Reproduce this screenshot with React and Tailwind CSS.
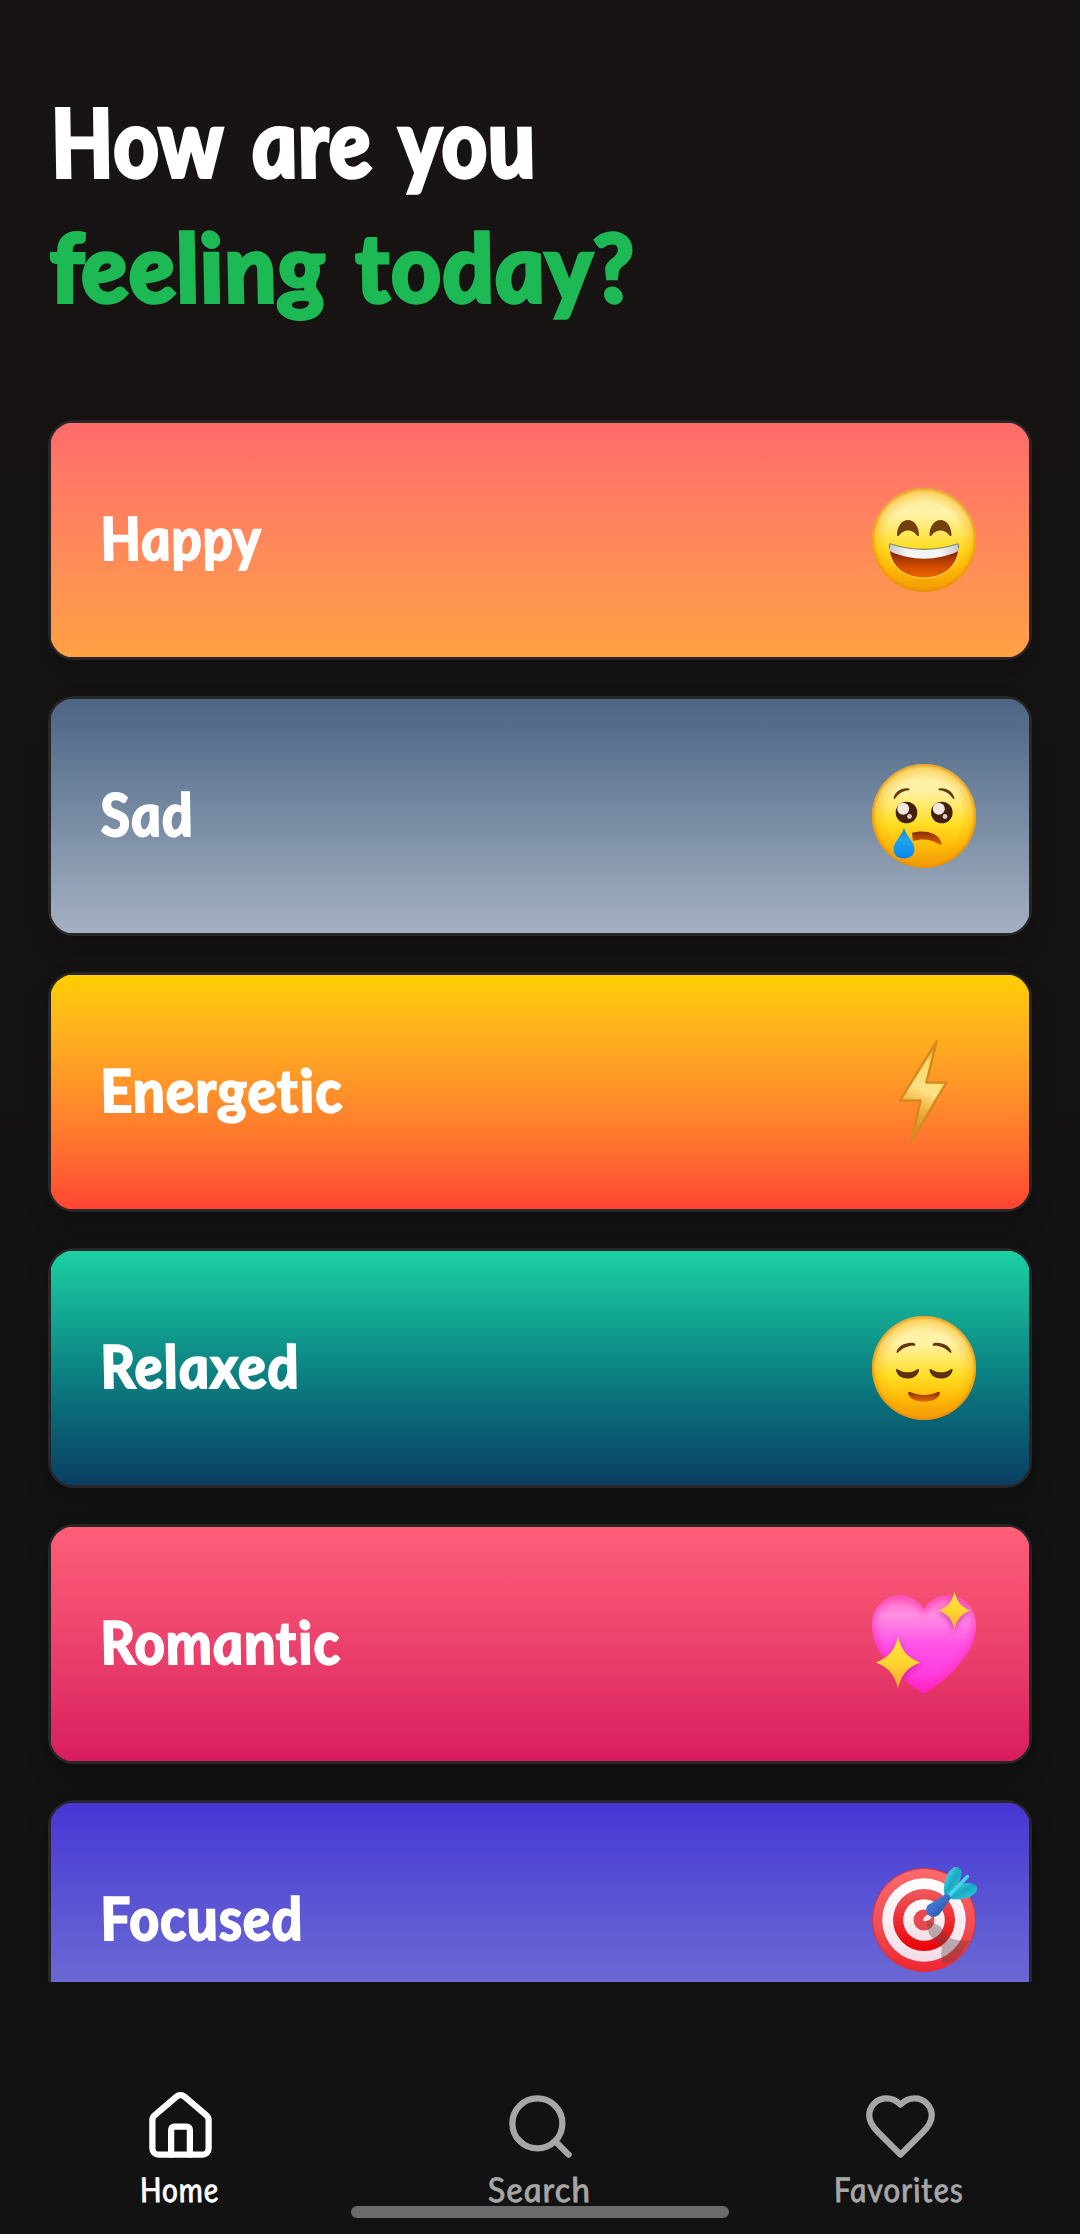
import React, { useLayoutEffect, useRef, useState } from "react";

// Text line squeezed horizontally to an exact width, with the italic slant removed.
function FitText({ width, className = "", children }) {
  const ref = useRef(null);
  const [scale, setScale] = useState(1);
  useLayoutEffect(() => {
    const fit = () => {
      if (ref.current) setScale(width / ref.current.offsetWidth);
    };
    fit();
    if (document.fonts) document.fonts.ready.then(fit);
  }, [width]);
  return (
    <span className="block" style={{ width }}>
      <span
        ref={ref}
        className={"inline-block whitespace-nowrap italic origin-[0%_80%] [font-variant-ligatures:none] " + className}
        style={{ transform: `scaleX(${scale}) skewX(8deg)` }}
      >
        {children}
      </span>
    </span>
  );
}

function FaceBase({ id }) {
  return (
    <>
      <defs>
        <linearGradient id={id + "l"} x1="0" y1="0" x2="0" y2="1">
          <stop offset="0" stopColor="#ffeb98" />
          <stop offset="0.25" stopColor="#fff3a8" />
          <stop offset="0.58" stopColor="#ffdd22" />
          <stop offset="0.8" stopColor="#ffba08" />
          <stop offset="1" stopColor="#f0920a" />
        </linearGradient>
        <radialGradient id={id + "r"} cx="0.5" cy="0.5" r="0.5">
          <stop offset="0.72" stopColor="#f5a400" stopOpacity="0" />
          <stop offset="0.92" stopColor="#f5a400" stopOpacity="0.35" />
          <stop offset="1" stopColor="#e08a08" stopOpacity="0.85" />
        </radialGradient>
      </defs>
      <circle cx="52" cy="52" r="52" fill={`url(#${id}l)`} />
      <circle cx="52" cy="52" r="52" fill={`url(#${id}r)`} />
    </>
  );
}

function HappyFace() {
  return (
    <svg viewBox="0 0 104 104" className="size-[104px]">
      <defs>
        <linearGradient id="mouth" x1="0" y1="0" x2="0" y2="1">
          <stop offset="0.3" stopColor="#8f2c05" />
          <stop offset="0.65" stopColor="#cf4a00" />
          <stop offset="1" stopColor="#ee6a00" />
        </linearGradient>
        <linearGradient id="teeth" x1="0" y1="0" x2="1" y2="0">
          <stop offset="0" stopColor="#c9c9cc" />
          <stop offset="0.25" stopColor="#f4f3f5" />
          <stop offset="0.75" stopColor="#f4f3f5" />
          <stop offset="1" stopColor="#c9c9cc" />
        </linearGradient>
      </defs>
      <FaceBase id="hf" />
      <path d="M25 47.500c0-9 4.500-15.500 11-15.500s11 6.500 11 15.500c-1 1-2 .5-2.500-.5-2-3-5-4.500-8.500-4.500s-6.500 1.500-8.500 4.500c-.5 1-1.500 1.500-2.500.5z" fill="#75400f" />
      <path d="M57.500 47.500c0-9 4.500-15.500 11-15.500s11 6.500 11 15.500c-1 1-2 .5-2.500-.5-2-3-5-4.500-8.500-4.500s-6.500 1.500-8.500 4.500c-.5 1-1.500 1.500-2.500.5z" fill="#75400f" />
      <path d="M17 57.500c0-1 1-1.700 2-1.300 21 7 45 7 66 0 1-.4 2 .3 2 1.300 0 19-14 32.500-35 32.500s-35-13.500-35-32.500z" fill="url(#mouth)" stroke="#ffd85a" strokeWidth="1" />
      <path d="M17.500 57c0-1 .7-1.300 1.500-1 21 7 45 7 66 0 .8-.3 1.500 0 1.500 1 0 3-.5 5-1 6.500-20 9.500-47 9.500-67 0-.5-1.500-1-3.500-1-6.500z" fill="url(#teeth)" />
      <path d="M17.500 60v-3c0-1 .7-1.300 1.500-1 21 7 45 7 66 0 .8-.3 1.500 0 1.500 1v3" fill="none" stroke="#7f8c66" strokeWidth="1.300" />
    </svg>
  );
}

function SadFace() {
  return (
    <svg viewBox="0 0 104 104" className="size-[104px]">
      <defs>
        <linearGradient id="tear" x1="0" y1="0" x2="0" y2="1">
          <stop offset="0" stopColor="#1780b8" />
          <stop offset="0.4" stopColor="#22a5ee" />
          <stop offset="1" stopColor="#0784ee" />
        </linearGradient>
        <linearGradient id="frown" x1="0" y1="0" x2="0" y2="1">
          <stop offset="0" stopColor="#8a2f04" />
          <stop offset="1" stopColor="#df6000" />
        </linearGradient>
      </defs>
      <FaceBase id="sf" />
      <path d="M21.500 34c2-7 8-10.500 15.500-9.500.8.300.8 1.500 0 1.800-6 .5-10 3-14 8.200-.5.700-1.700.5-1.500-.5zM82.500 34c-2-7-8-10.500-15.500-9.500-.8.300-.8 1.500 0 1.800 6 .5 10 3 14 8.200.5.700 1.700.5 1.500-.5z" fill="#6a3a0e" />
      <circle cx="34.500" cy="48.500" r="10.800" fill="#43200c" />
      <circle cx="69.800" cy="48.500" r="10.800" fill="#43200c" />
      <circle cx="31.200" cy="44.700" r="6" fill="#f1e6e2" />
      <circle cx="66.800" cy="44.700" r="6" fill="#f1e6e2" />
      <circle cx="37.500" cy="52.500" r="2.400" fill="#dccbc6" />
      <circle cx="73" cy="52.500" r="2.400" fill="#dccbc6" />
      <path d="M40 69c9-3 26-2 29.500 10 .3 1.700-1 2.200-2.300 1.400-7.500-5-17-6.400-26.200-3.400z" fill="url(#frown)" />
      <path d="M32 63.500c1.500 8 10.500 14 10.500 21.500 0 6-4 9.500-10.500 9.500s-10.500-3.500-10.500-9.500c0-7.500 9-13.500 10.500-21.500z" fill="url(#tear)" />
    </svg>
  );
}

function Bolt() {
  return (
    <svg viewBox="0 0 104 104" className="size-[104px]">
      <defs>
        <linearGradient id="bolt" x1="0.6" y1="0" x2="0.4" y2="1">
          <stop offset="0" stopColor="#dc8d20" />
          <stop offset="0.2" stopColor="#fbd968" />
          <stop offset="0.48" stopColor="#fce287" />
          <stop offset="0.65" stopColor="#f1b544" />
          <stop offset="0.8" stopColor="#e49a32" />
          <stop offset="1" stopColor="#d08020" />
        </linearGradient>
      </defs>
      <path d="M64.500 1.500 54.500 42.500H74.500L39 102.500 48.500 60.500H28z" fill="url(#bolt)" stroke="#d68a1c" strokeWidth="2.500" strokeLinejoin="round" />
    </svg>
  );
}

function RelaxedFace() {
  return (
    <svg viewBox="0 0 104 104" className="size-[104px]">
      <defs>
        <linearGradient id="smile" x1="0" y1="0" x2="0" y2="1">
          <stop offset="0" stopColor="#8a2f04" />
          <stop offset="1" stopColor="#e06808" />
        </linearGradient>
      </defs>
      <FaceBase id="rf" />
      <path d="M24.500 36c1.500-6 8-9.800 16.500-9.300 2 .3 3 1.800 2 3-6.500-.5-11.500 1.500-17 6.800-.8.700-1.700.4-1.500-.5zM79.500 36c-1.500-6-8-9.800-16.500-9.300-2 .3-3 1.800-2 3 6.500-.5 11.500 1.500 17 6.800.8.700 1.700.4 1.500-.5z" fill="#643711" />
      <path d="M24 54.500c-.3-1.500 1-2 2-1 6.500 3.800 13 3.800 19 0 1.200-1 2.500-.3 2 1.200-1.500 5-5.500 7.800-11.500 7.800s-10.300-3-11.500-8zM57.500 54.500c-.3-1.500 1-2 2-1 6.500 3.800 13 3.800 19 0 1.200-1 2.500-.3 2 1.200-1.500 5-5.500 7.800-11.500 7.800s-10.300-3-11.500-8z" fill="#5c3011" />
      <path d="M36 77.500c-.3-1.700 1-2.200 2.300-1.500 9 4 18.500 4 27.500 0 1.300-.7 2.500-.2 2.200 1.500-1.500 5.500-7.500 8-16 8s-14.500-2.500-16-8z" fill="url(#smile)" />
    </svg>
  );
}

function SparkHeart() {
  return (
    <svg viewBox="0 0 104 104" className="size-[104px] overflow-visible">
      <defs>
        <linearGradient id="hrt" x1="0" y1="0" x2="0" y2="1">
          <stop offset="0" stopColor="#ff6cc0" />
          <stop offset="0.2" stopColor="#ff8fe4" />
          <stop offset="0.5" stopColor="#ff52e6" />
          <stop offset="0.8" stopColor="#ff3ddd" />
          <stop offset="1" stopColor="#ff1fc4" />
        </linearGradient>
        <linearGradient id="spark" x1="0" y1="0" x2="0" y2="1">
          <stop offset="0" stopColor="#ffe73a" />
          <stop offset="0.5" stopColor="#ffd531" />
          <stop offset="1" stopColor="#f8a62a" />
        </linearGradient>
        <clipPath id="hclip">
          <path d="M52 101.500C38 94 0 66 0 34 0 16 12 3.500 28 3.500c11 0 19 5.500 24 13.500C57 9 65 3.500 76 3.500c16 0 28 12.500 28 30.500 0 32-38 60-52 67.500z" />
        </clipPath>
        <filter id="soft" x="-20%" y="-20%" width="140%" height="140%">
          <feGaussianBlur stdDeviation="3" />
        </filter>
      </defs>
      <path d="M52 101.500C38 94 0 66 0 34 0 16 12 3.500 28 3.500c11 0 19 5.500 24 13.500C57 9 65 3.500 76 3.500c16 0 28 12.500 28 30.500 0 32-38 60-52 67.500z" fill="url(#hrt)" />
      <g clipPath="url(#hclip)">
        <path d="M52 101.500C38 94 0 66 0 34 0 16 12 3.500 28 3.500c11 0 19 5.500 24 13.500C57 9 65 3.500 76 3.500c16 0 28 12.500 28 30.500 0 32-38 60-52 67.500z" fill="none" stroke="#ff2ab0" strokeWidth="7" opacity="0.6" filter="url(#soft)" />
        <path d="M82 4c2 10 7 15 17 17-10 2-15 9-17 20-2-11-7-18-17-20 10-2 15-7 17-17zM26 48c3 14 9 21 23 25-14 4-20 12-23 26-3-14-9-22-23-26 14-4 20-11 23-25z" fill="#a51079" opacity="0.6" filter="url(#soft)" />
      </g>
      <path d="M82.500-.5c2 9.500 7 16 16 19-9 3-14 9.500-16 19-2-9.500-7-16-16-19 9-3 14-9.500 16-19z" fill="url(#spark)" />
      <path d="M26 44.500c3 13 9.500 21.500 22 26-12.500 4.500-19 13-22 26-3-13-9.500-21.500-22-26 12.500-4.500 19-13 22-26z" fill="url(#spark)" />
    </svg>
  );
}

function Target() {
  return (
    <svg viewBox="0 0 104 104" className="size-[104px] overflow-visible">
      <defs>
        <linearGradient id="ringA" x1="0" y1="0" x2="0" y2="1">
          <stop offset="0" stopColor="#ff6a6c" />
          <stop offset="0.6" stopColor="#ef4a50" />
          <stop offset="1" stopColor="#f02630" />
        </linearGradient>
        <linearGradient id="ringB" x1="0" y1="0" x2="0" y2="1">
          <stop offset="0" stopColor="#ee5a5c" />
          <stop offset="1" stopColor="#ea0008" />
        </linearGradient>
        <linearGradient id="ringW" x1="0" y1="0" x2="0" y2="1">
          <stop offset="0" stopColor="#ffffff" />
          <stop offset="1" stopColor="#f1dde6" />
        </linearGradient>
        <linearGradient id="wing" x1="0" y1="0" x2="1" y2="1">
          <stop offset="0" stopColor="#5fe0ea" />
          <stop offset="0.5" stopColor="#17a9c4" />
          <stop offset="1" stopColor="#3bd2e2" />
        </linearGradient>
        <linearGradient id="shaft" x1="0" y1="0" x2="1" y2="1">
          <stop offset="0" stopColor="#5b8be6" />
          <stop offset="1" stopColor="#1b4fa8" />
        </linearGradient>
        <clipPath id="board">
          <circle cx="52" cy="52" r="51" />
        </clipPath>
      </defs>
      <circle cx="52" cy="52" r="51.500" fill="url(#ringA)" stroke="#d8303c" strokeWidth="1" />
      <circle cx="52" cy="52" r="41.800" fill="url(#ringW)" />
      <circle cx="52" cy="52" r="31" fill="url(#ringB)" />
      <circle cx="52" cy="52" r="20.800" fill="url(#ringW)" />
      <circle cx="52" cy="52" r="10.500" fill="#e64a50" />
      <g clipPath="url(#board)">
        <path d="M54 52 68 58 76 69Q86 74 98 73L84 92 71 96Q68 88 70 80L57 66z" fill="#5c4444" opacity="0.38" />
      </g>
      <path d="M72.500 28c-2-13 2-24 9-28.500 4-1.500 8 1 8 5l-1.500 8-12 15.500z" fill="url(#wing)" />
      <path d="M77 30 89 16c7-2 14-1 16 3 1 5-5 10-12 11.500-6 1.500-12 1-17 0z" fill="url(#wing)" />
      <path d="M76 28.500 95.500 8.500" stroke="#43d6ea" strokeWidth="3.400" strokeLinecap="round" />
      <path d="M51 52.500c0-3 4-6 6-6l3 3c-2 2-6 5-9 3z" fill="#f3e6e8" />
      <path d="M56 37 73 26.500q2-1 4 .5t1 4.500L68 45.500c-3 4-9 4.500-12 1-2.500-3-2.500-6.500 0-9.500z" fill="url(#shaft)" />
    </svg>
  );
}

const moods = [
  { name: "Happy", width: 161, fill: "from-[#ff6b6b] to-[#ffa143]", Icon: HappyFace },
  { name: "Sad", width: 93, fill: "from-[#4b6584] to-[#a5b1c2]", Icon: SadFace },
  { name: "Energetic", width: 243, fill: "from-[#ffce00] to-[#ff4433]", Icon: Bolt },
  { name: "Relaxed", width: 199, fill: "from-[#1dd1a1] to-[#0a3d62]", Icon: RelaxedFace },
  { name: "Romantic", width: 240, fill: "from-[#ff5e78] to-[#d81b60]", Icon: SparkHeart },
  { name: "Focused", width: 203, fill: "from-[#4834d4] to-[#7875d2]", Icon: Target },
];

function MoodCard({ name, width, fill, Icon }) {
  return (
    <div className="h-60 shrink-0 rounded-[26px] border-[3px] border-[#282626] bg-[#151313] shadow-[0_12px_24px_rgba(0,0,0,0.2)]">
      <div className={"flex h-full items-center justify-between bg-linear-to-b pl-[52px] pr-[53px] [clip-path:inset(-1px_round_25px)] " + fill}>
        <div className="pb-[4px]">
          <FitText width={width} className="text-[59px] font-bold leading-[72px] tracking-[1px] [-webkit-text-stroke:2px_white]">
            {name}
          </FitText>
        </div>
        <Icon />
      </div>
    </div>
  );
}

const tabs = [
  {
    name: "Home",
    width: 79,
    tone: "text-white",
    paths: ["M15 21v-8a1 1 0 0 0-1-1h-4a1 1 0 0 0-1 1v8", "M3 10a2 2 0 0 1 .709-1.528l7-6a2 2 0 0 1 2.582 0l7 6A2 2 0 0 1 21 10v9a2 2 0 0 1-2 2H5a2 2 0 0 1-2-2z"],
  },
  {
    name: "Search",
    width: 103,
    tone: "text-[#a7a7a7]",
    paths: ["M19 11a8 8 0 1 1-16 0 8 8 0 0 1 16 0z", "m21 21-4.300-4.300"],
  },
  {
    name: "Favorites",
    width: 130,
    tone: "text-[#a7a7a7]",
    paths: ["M19 14c1.490-1.460 3-3.210 3-5.500A5.500 5.500 0 0 0 16.500 3c-1.760 0-3 .5-4.500 2-1.500-1.500-2.740-2-4.500-2A5.500 5.500 0 0 0 2 8.500c0 2.300 1.500 4.050 3 5.500l7 7Z"],
  },
];

export default function App() {
  return (
    <div className="relative flex h-[2234px] w-[1080px] flex-col overflow-hidden bg-linear-to-b from-[#191414] to-[#121212] to-70% font-['Lato','Liberation_Sans',sans-serif] text-white">
      <h1 className="h-[420px] shrink-0 pt-[78px] text-[94px] font-bold leading-[125px]">
        <div className="pl-[55px]">
          <FitText width={485} className="[word-spacing:10px] tracking-[1px] [-webkit-text-stroke:4px_white]">How are you</FitText>
        </div>
        <div className="pl-[50px] text-[#1db954]">
          <FitText width={590} className="[word-spacing:8px] tracking-[1px] [-webkit-text-stroke:4px_#1db954]">
            <span className="inline-block origin-[0%_80%] -skew-x-8 not-italic">f</span>eeling today?
          </FitText>
        </div>
      </h1>
      <main className="-mt-10 flex h-[1602px] shrink-0 flex-col gap-9 overflow-hidden px-12 pt-10">
        {moods.map((m) => (
          <MoodCard key={m.name} {...m} />
        ))}
      </main>
      <nav className="grid flex-1 grid-cols-3 bg-[#121212] pt-[107px]">
        {tabs.map((t) => (
          <div key={t.name} className={"flex flex-col items-center gap-[5px] " + t.tone}>
            <svg viewBox="0 0 24 24" className="size-[75px] shrink-0" fill="none" stroke="currentColor" strokeWidth="2" strokeLinecap="round" strokeLinejoin="round">
              {t.paths.map((d) => (
                <path key={d} d={d} />
              ))}
            </svg>
            <FitText width={t.width} className="text-[34px] font-normal leading-[40px] tracking-[1px] [-webkit-text-stroke:0.8px_currentColor]">
              {t.name}
            </FitText>
          </div>
        ))}
      </nav>
      <div className="absolute bottom-4 left-[351px] h-3 w-[378px] rounded-full bg-[#6b6b6b]" />
    </div>
  );
}
